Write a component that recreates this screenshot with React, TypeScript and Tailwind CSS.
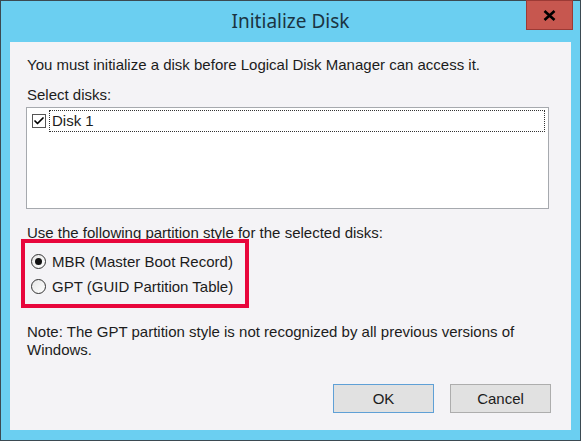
import { Check } from "lucide-react"

const sans = "font-['Liberation_Sans',Arial,sans-serif]"

function Radio({ checked, label }: { checked?: boolean; label: string }) {
  return (
    <div className="flex h-[25px] items-center">
      <span className="ml-[21px] flex h-[15px] w-[15px] items-center justify-center rounded-full border border-[#333] bg-gradient-to-br from-[#e6e6e6] to-white">
        {checked && <span className="h-[7px] w-[7px] rounded-full bg-[#111]" />}
      </span>
      <span className="ml-[6px]">{label}</span>
    </div>
  )
}

export default function App() {
  return (
    <div className="h-[441px] w-[581px] bg-[#333]">
      <div className="relative flex h-full w-full flex-col border border-[#3b4a52] bg-[#6bcff1] px-[9px] pb-[10px]">
        {/* title bar */}
        <div className="flex h-[41px] shrink-0 items-center justify-center">
          <span className="mt-[-1px] font-['Noto_Sans',sans-serif] text-[19px] text-[#1b3442]">
            Initialize Disk
          </span>
        </div>
        <button className="absolute right-[7px] top-[-1px] flex h-[30px] w-[47px] items-center justify-center border border-[#9c3a35] bg-[#c7574f]">
          <svg width="13" height="11" viewBox="0 0 13 11">
            <path d="M1.5 1 L11.5 10 M11.5 1 L1.5 10" stroke="#000" strokeWidth="2.6" />
          </svg>
        </button>

        {/* body */}
        <div className={`flex flex-1 flex-col bg-[#f4f3f6] pt-[14px] pb-[17px] text-[15px] leading-[18px] text-[#1c1c1c] ${sans}`}>
          <p className="ml-[17px]">You must initialize a disk before Logical Disk Manager can access it.</p>
          <p className="ml-[17px] mt-[12px]">Select disks:</p>

          <div className="ml-[16px] mr-[22px] mt-[3px] h-[102px] border border-[#a6a9ae] bg-white px-[3px] pt-[2px]">
            <div className="flex h-[22px] items-center">
              <span className="ml-[2px] flex h-[14px] w-[14px] items-center justify-center border border-[#555] bg-white">
                <Check size={12} strokeWidth={3.5} color="#000" />
              </span>
              <div className="ml-[3px] flex h-full flex-1 items-center border border-dotted border-[#333] pl-[2px]">
                Disk 1
              </div>
            </div>
          </div>

          <p className="ml-[17px] mt-[15px]">Use the following partition style for the selected disks:</p>

          <div className="relative mt-[7px]">
            <div className="absolute left-[11px] top-[-10px] h-[69px] w-[228px] border-[4px] border-[#e8063c]" />
            <Radio checked label="MBR (Master Boot Record)" />
            <Radio label="GPT (GUID Partition Table)" />
          </div>

          <p className="ml-[17px] mt-[24px]">
            Note: The GPT partition style is not recognized by all previous versions of
            <br />
            Windows.
          </p>

          <div className="mt-auto flex justify-end gap-[16px] pr-[20px]">
            <button className="h-[29px] w-[101px] border border-[#5fa0d6] bg-[#e1e1e1] text-[15px]">OK</button>
            <button className="h-[29px] w-[101px] border border-[#adadad] bg-[#e1e1e1] text-[15px]">Cancel</button>
          </div>
        </div>
      </div>
    </div>
  )
}
